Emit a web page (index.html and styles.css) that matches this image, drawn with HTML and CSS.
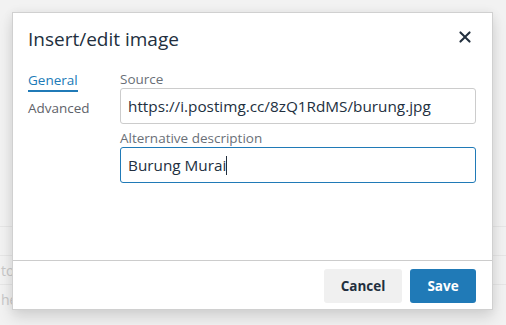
FILE: index.html
```html
<!DOCTYPE html>
<html>
<head>
<meta charset="utf-8">
<link rel="stylesheet" href="styles.css">
</head>
<body>
<div class="backdrop">
  <div class="bg-row bg-row-1"></div>
  <div class="bg-row bg-row-2"><span class="bg-text">to</span></div>
  <div class="bg-row bg-row-3"><span class="bg-text">he</span></div>
</div>
<div class="dialog">
  <div class="dialog-header">
    <div class="dialog-title">Insert/edit image</div>
    <button class="close-btn" aria-label="Close">
      <svg width="24" height="24" viewBox="0 0 24 24"><path d="M17.3 8.2L13.4 12l3.9 3.8a1 1 0 0 1-1.5 1.5L12 13.4l-3.8 3.9a1 1 0 0 1-1.5-1.5l3.9-3.8-3.9-3.8a1 1 0 0 1 1.5-1.5l3.8 3.9 3.8-3.9a1 1 0 0 1 1.5 1.5z" fill="#222f3e"/></svg>
    </button>
  </div>
  <div class="dialog-body">
    <div class="tabs">
      <div class="tab tab-active">General</div>
      <div class="tab">Advanced</div>
    </div>
    <div class="form">
      <label class="field-label">Source</label>
      <div class="input">https://i.postimg.cc/8zQ1RdMS/burung.jpg</div>
      <label class="field-label">Alternative description</label>
      <div class="input input-focus">Burung Murai<span class="caret"></span></div>
    </div>
  </div>
  <div class="dialog-footer">
    <button class="btn btn-secondary">Cancel</button>
    <button class="btn btn-primary">Save</button>
  </div>
</div>
</body>
</html>
```

FILE: styles.css
```css
* { box-sizing: border-box; }
html, body { margin: 0; padding: 0; }
body {
  width: 506px;
  height: 325px;
  overflow: hidden;
  background: #f2f2f2;
  font-family: "Open Sans", "Noto Sans", sans-serif;
  color: #222f3e;
  position: relative;
}
.backdrop {
  padding-top: 226px;
}
.bg-row {
  height: 29px;
  border-top: 1px solid #e6e6e6;
  display: flex;
  align-items: center;
}
.bg-text {
  color: #c8c8c8;
  font-size: 14px;
  margin-left: 1px;
}
.dialog {
  position: absolute;
  left: 12px;
  top: 12px;
  width: 481px;
  height: 298px;
  background: #fff;
  border: 1px solid #d0d0d0;
  box-shadow: 0 8px 14px rgba(0,0,0,0.12), 0 0 10px rgba(0,0,0,0.06);
  display: flex;
  flex-direction: column;
}
.dialog-header {
  display: flex;
  align-items: flex-start;
  justify-content: space-between;
  padding: 13px 16px 0 15px;
  height: 52px;
}
.dialog-title {
  font-size: 19px;
  line-height: 26px;
  color: #222f3e;
}
.close-btn {
  border: 0;
  background: none;
  padding: 0;
  width: 24px;
  height: 24px;
  display: flex;
  margin-top: -1px;
  margin-right: -1px;
}
.dialog-body {
  flex: 1;
  display: flex;
  padding: 5px 16px 0 15px;
}
.tabs {
  width: 92px;
  display: flex;
  flex-direction: column;
  align-items: flex-start;
}
.tab {
  font-size: 13.5px;
  line-height: 20px;
  color: #5f636a;
  padding-bottom: 6px;
}
.tab-active {
  color: #207ab7;
  border-bottom: 2px solid #207ab7;
  padding-bottom: 0;
  margin-bottom: 6px;
}
.form {
  flex: 1;
  display: flex;
  flex-direction: column;
}
.field-label {
  font-size: 13.5px;
  line-height: 18px;
  color: #6a6f77;
}
.input {
  height: 36px;
  border: 1px solid #cccccc;
  border-radius: 3px;
  padding: 0 7px;
  font-size: 15.3px;
  line-height: 34px;
  color: #222f3e;
  margin-bottom: 5px;
  white-space: nowrap;
}
.input-focus {
  border-color: #207ab7;
}
.caret {
  display: inline-block;
  width: 1px;
  height: 19px;
  background: #222f3e;
  vertical-align: -4px;
}
.dialog-footer {
  border-top: 1px solid #cccccc;
  display: flex;
  justify-content: flex-end;
  gap: 8px;
  padding: 8px 16px 6px 16px;
}
.btn {
  font-family: "Open Sans", "Noto Sans", sans-serif;
  font-weight: 700;
  font-size: 13.5px;
  height: 34px;
  border-radius: 3px;
  border: 0;
  padding: 0;
}
.btn-secondary {
  width: 78px;
  background: #f0f0f0;
  color: #222f3e;
}
.btn-primary {
  width: 66px;
  background: #207ab7;
  color: #fff;
}
```
